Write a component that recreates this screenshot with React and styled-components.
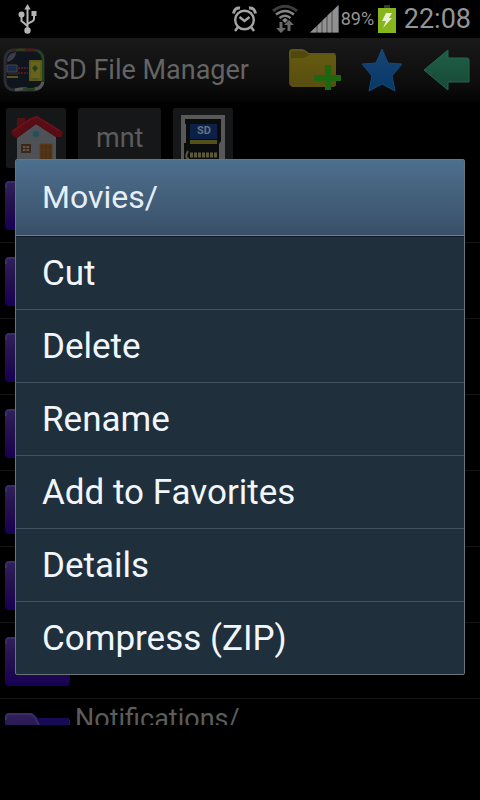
import React from "react";
import styled, { createGlobalStyle } from "styled-components";

const GlobalStyle = createGlobalStyle`
  * { box-sizing: border-box; }
  body { margin: 0; background: #000; font-family: Roboto, "Liberation Sans", sans-serif; }
  button { font: inherit; color: inherit; border: 0; margin: 0; padding: 0; background: none; cursor: pointer; }
  svg { display: block; flex: none; }
`;

const Screen = styled.div`
  position: relative;
  display: flex;
  flex-direction: column;
  height: 100vh;
  overflow: hidden;
  background: #000;
`;

const StatusBar = styled.header`
  display: flex;
  align-items: center;
  flex: none;
  height: 38px;
  padding: 0 9px 0 18px;
  color: #959595;
`;

const StatusGroup = styled.div`
  display: flex;
  align-items: center;
  margin-left: auto;
`;

const AlarmSlot = styled.span`
  margin-right: 15px;
`;

const WifiSlot = styled.span`
  margin-right: 12px;
`;

const Percent = styled.span`
  width: 39px;
  padding-left: 2px;
  font-size: 18px;
  line-height: 38px;
`;

const Clock = styled.time`
  margin-left: 8px;
  font-size: 27px;
  line-height: 38px;
`;

const TitleBar = styled.div`
  display: flex;
  align-items: center;
  flex: none;
  height: 64px;
  padding: 0 10px 0 3px;
  background: linear-gradient(#191919, #0c0c0c 75%, #030303);
`;

const AppTitle = styled.h1`
  flex: 1;
  margin: 0 0 0 8px;
  font-size: 27px;
  line-height: 34px;
  font-weight: 400;
  white-space: nowrap;
  color: #646464;
`;

const Actions = styled.div`
  display: flex;
  align-items: center;
  gap: 20px;
`;

const Breadcrumbs = styled.nav`
  display: flex;
  flex: none;
  gap: 12px;
  height: 65px;
  padding: 6px 6px 0;
`;

const Crumb = styled.button`
  display: flex;
  align-items: center;
  justify-content: center;
  min-width: 60px;
  height: 60px;
  padding: 0 ${(p) => (p.$text ? "18px" : "0")};
  border-radius: 2px;
  background: #161719;
  color: #5c5c5c;
  font-size: 27px;
`;

const FileList = styled.ul`
  flex: 1;
  min-height: 0;
  margin: 0;
  padding: 0;
  overflow: hidden;
  list-style: none;
`;

const FileRow = styled.li`
  display: flex;
  gap: 5px;
  height: 76px;
  padding: 14px 5px 0;
  border-bottom: 1px solid #151515;
`;

const FileName = styled.span`
  margin-top: -10px;
  font-size: 27px;
  line-height: 32px;
  color: #5c5c5c;
`;

const Footer = styled.div`
  flex: none;
  height: 75px;
`;

const Overlay = styled.div`
  position: absolute;
  inset: 38px 0 0;
  display: flex;
  align-items: center;
  padding: 0 15px 4px;
`;

const Dialog = styled.section`
  width: 100%;
  border: 1px solid #6d7479;
  border-radius: 2px;
  overflow: hidden;
  background: #1f2f3c;
  color: #f1f6fc;
`;

const DialogTitle = styled.h2`
  margin: 0;
  padding: 0 26px;
  font-size: 32px;
  line-height: 75px;
  font-weight: 400;
  color: #e6eef8;
  background: linear-gradient(#4c6f8e, #3a5068);
  border-bottom: 1px solid #687e92;
`;

const Menu = styled.div`
  display: flex;
  flex-direction: column;
  border-top: 1px solid #101c27;
`;

const MenuItem = styled.button`
  padding: 2px 26px 0;
  font-size: 35px;
  line-height: 70px;
  text-align: left;

  & + & { border-top: 1px solid #435260; }
`;

const UsbIcon = () => (
  <svg width="20" height="30" viewBox="0 0 20 30" fill="none" stroke="#b4b4b4" strokeWidth="2" aria-label="USB connected" role="img">
    <path d="M9.5 5v20M3.5 12v5l6 5M16 10v5c0 2-1 2-6.5 5" />
    <path d="m9.5 0 3.2 5.5H6.3z" fill="#b4b4b4" stroke="none" />
    <circle cx="3.5" cy="10.5" r="3" fill="#b4b4b4" stroke="none" />
    <path d="M13.5 7h5v5h-5z" fill="#b4b4b4" stroke="none" />
    <circle cx="9.5" cy="26.5" r="3.2" fill="#b4b4b4" stroke="none" />
  </svg>
);

const AlarmIcon = () => (
  <svg width="25" height="26" viewBox="0 0 25 26" fill="none" stroke="#a4a4a4" aria-label="Alarm" role="img">
    <circle cx="12.5" cy="14" r="9.3" strokeWidth="2.4" />
    <path d="m7.5 11 5 4 5-4" strokeWidth="2.3" />
    <path d="M1.5 7.5C2 3.5 4.5 1.500 8 2M23.500 7.500C23 3.500 20.500 1.500 17 2" strokeWidth="3" />
    <path d="m6 21-3 4M19 21l3 4" strokeWidth="2.5" />
  </svg>
);

const WifiIcon = () => (
  <svg width="26" height="28" viewBox="0 0 26 28" fill="none" aria-label="Wi-Fi" role="img">
    <path d="M1 6Q13-3.500 25 6" stroke="#3d3d3d" strokeWidth="3" />
    <path d="M4 9.500q9-7 18 0M7.500 13q5.500-4.500 11 0" stroke="#858585" strokeWidth="2.500" />
    <path d="m10 15 3-2 3 2-3 3z" fill="#858585" />
    <path d="M7.500 17h3v6h3.500l-5 5-5-5h3.500z" fill="#696969" />
    <path d="M18.500 26h-3v-6h-3.500l5-5 5 5h-3.500z" fill="#696969" />
  </svg>
);

const SignalIcon = () => (
  <svg width="29" height="28" viewBox="0 0 29 28" aria-label="Signal strength" role="img">
    <path d="M0 27.500 28.500 0v27.500z" fill="#4a4a4a" />
    <path d="M0 27.500 6.500 21.500v6zM7.500 20.500l4-4v11h-4zM12.500 15.500l4-4v16h-4zM17.500 10.500l4-4v21h-4zM22.500 6 28.500 0v27.500h-6z" fill="#919191" />
  </svg>
);

const BatteryIcon = () => (
  <svg width="18" height="28" viewBox="0 0 18 28" aria-label="Battery charging" role="img">
    <path d="M6 0h6v3H6z" fill="#383838" />
    <path d="M0 3h18v25H0z" fill="#86b51c" />
    <path d="M8 8h6l-3 5h3L5 23l3-7H4z" fill="#e9f2d6" />
  </svg>
);

const AppLogo = () => (
  <svg width="42" height="44" viewBox="0 0 42 44" aria-hidden="true">
    <rect x="2" y="2" width="38" height="40" rx="9" fill="#10151d" stroke="#2b2e31" strokeWidth="3" />
    <path d="M10 2q12-1 22 0" fill="none" stroke="#581616" strokeWidth="2" />
    <path d="M13 2q5-1 9 0M35 3q6 2 5 10v20" fill="none" stroke="#1d4a19" strokeWidth="2" />
    <path d="M12 42q8-2 12-1M31 41q7 0 9-7" fill="none" stroke="#565656" strokeWidth="3" />
    <path d="M20 41h12" stroke="#1d4a19" strokeWidth="2" />
    <path d="M4 13q0-7 9-9 0 7-8 10z" fill="#3a3d46" />
    <path d="M4 17h10v7H4z" fill="#1b2a49" stroke="#45434b" />
    <path d="M4 28h11v2H4z" fill="#5a5424" />
    <path d="M5 26h10" stroke="#28231b" strokeWidth="2" />
    <path d="M15 20h10M15 25h10" stroke="#571818" strokeWidth="2" strokeDasharray="2 1" />
    <rect x="26" y="12" width="13" height="21" rx="1" fill="#5c5a1b" />
    <path d="M28 14h9v16h-9z" fill="#68631b" />
    <path d="m32 17 3 3-3 4-3-4z" fill="#263f1d" />
    <path d="M30 31h5" stroke="#39463a" />
  </svg>
);

const AddFolderIcon = () => (
  <svg width="52" height="44" viewBox="0 0 52 44" aria-hidden="true">
    <defs>
      <linearGradient id="addFolder" x2="0" y2="1">
        <stop stopColor="#655a10" /><stop offset="1" stopColor="#574e10" />
      </linearGradient>
    </defs>
    <path d="M3 1h10q2 0 4 2l3 2h25q2 0 2 2v31H3q-3 0-3-3V4q0-3 3-3z" fill="#51480e" />
    <path d="M1 35V13q0-3 4-3h10l6-3h23q3 0 3 3v25q0 4-3 4H4q-3 0-3-4z" fill="url(#addFolder)" />
    <path d="M1 11V5q0-3 3-3h9q3 0 7 4h25" fill="none" stroke="#6b601c" />
    <path d="M36 17h6v10h10v6H42v9h-6v-9H25v-6h11z" fill="#1e6611" />
  </svg>
);

const StarIcon = () => (
  <svg width="42" height="44" viewBox="0 0 42 44" aria-hidden="true">
    <defs>
      <linearGradient id="star" x2="0" y2="1">
        <stop stopColor="#164577" /><stop offset="1" stopColor="#083866" />
      </linearGradient>
    </defs>
    <path d="m21 1 6 14 14 1-10 12 3 15-13-7-13 7 3-15L1 16l14-1z" fill="url(#star)" stroke="#154878" strokeLinejoin="round" />
  </svg>
);

const BackIcon = () => (
  <svg width="47" height="42" viewBox="0 0 47 42" aria-hidden="true">
    <defs>
      <linearGradient id="back" x2="0" y2="1">
        <stop stopColor="#205f47" /><stop offset="1" stopColor="#164936" />
      </linearGradient>
    </defs>
    <path d="M1 21 25 1v8h19q2 0 2 2v22H25v8z" fill="url(#back)" stroke="#27654f" strokeLinejoin="round" />
  </svg>
);

const HomeIcon = () => (
  <svg width="56" height="56" viewBox="0 0 56 56" aria-hidden="true">
    <path d="M9 16V8h8v6z" fill="#541014" />
    <path d="M9 28 28 14l20 13v26H9z" fill="#4e5156" />
    <path d="M3 21 22 8l7-2 26 16-1 5h-6L28 14 9 28l-5-3z" fill="#580c14" />
    <path d="m5 21 18-12 6-2 23 14" fill="none" stroke="#6a1119" strokeWidth="2" />
    <circle cx="28" cy="24" r="3.5" fill="#284d58" stroke="#355a63" />
    <rect x="14" y="35" width="8" height="7" fill="#56565b" stroke="#3b2817" strokeWidth="2" />
    <path d="M18 35v7M14 38.5h8" stroke="#3b2817" />
    <path d="M32 34h12v20H32z" fill="#4c3014" stroke="#5c3c1d" />
    <path d="M36 35v18M40 35v18M32 40h12" stroke="#58391a" />
  </svg>
);

const SdCardIcon = () => (
  <svg width="44" height="48" viewBox="0 0 44 48" aria-hidden="true">
    <path d="M0 1h44v47H0z" fill="#585858" />
    <path d="M4 5h36v22l-2 3v18H3V29h2V10H4z" fill="#0b0c0e" />
    <path d="M9 10h27v15H9z" fill="#0b2049" />
    <path d="M9 26h27v4H9z" fill="#565019" />
    <text x="23" y="20" textAnchor="middle" fontFamily="Roboto, sans-serif" fontSize="11" fontWeight="700" fill="#68727f">SD</text>
    <path d="M7 37q-4 7 1 8" fill="none" stroke="#5b573b" strokeWidth="2" />
    <path d="M9 41h28" stroke="#5c5838" strokeWidth="5" strokeDasharray="3 1" />
  </svg>
);

const FolderIcon = () => (
  <svg width="65" height="50" viewBox="0 0 65 50" aria-hidden="true">
    <defs>
      <linearGradient id="folder" x2="0" y2="1">
        <stop stopColor="#30215a" /><stop offset="0.5" stopColor="#23104e" /><stop offset="1" stopColor="#180054" />
      </linearGradient>
    </defs>
    <path d="M4 0h21q3 0 5 3l3 2h28q4 0 4 4v36q0 4-4 4H4q-4 0-4-4V4q0-4 4-4z" fill="url(#folder)" />
    <path d="M28 5h33q3 0 3 4v3H34z" fill="#170b56" />
    <path d="M1 7V5q0-4 4-4h20q3 0 5 4l4 7" fill="none" stroke="#3b2b68" strokeWidth="2" />
  </svg>
);

const files = ["", "", "", "", "", "", "", "Notifications/"];
const commands = ["Cut", "Delete", "Rename", "Add to Favorites", "Details", "Compress (ZIP)"];

export default function App() {
  return (
    <>
      <GlobalStyle />
      <Screen>
        <StatusBar>
          <UsbIcon />
          <StatusGroup>
            <AlarmSlot><AlarmIcon /></AlarmSlot>
            <WifiSlot><WifiIcon /></WifiSlot>
            <SignalIcon />
            <Percent>89%</Percent>
            <BatteryIcon />
            <Clock>22:08</Clock>
          </StatusGroup>
        </StatusBar>
        <TitleBar>
          <AppLogo />
          <AppTitle>SD File Manager</AppTitle>
          <Actions>
            <button aria-label="New folder"><AddFolderIcon /></button>
            <button aria-label="Favorites"><StarIcon /></button>
            <button aria-label="Back"><BackIcon /></button>
          </Actions>
        </TitleBar>
        <Breadcrumbs>
          <Crumb aria-label="Home"><HomeIcon /></Crumb>
          <Crumb $text>mnt</Crumb>
          <Crumb aria-label="SD card"><SdCardIcon /></Crumb>
        </Breadcrumbs>
        <FileList>
          {files.map((name, i) => (
            <FileRow key={i}>
              <FolderIcon />
              {name && <FileName>{name}</FileName>}
            </FileRow>
          ))}
        </FileList>
        <Footer />
        <Overlay>
          <Dialog role="dialog" aria-labelledby="dialog-title">
            <DialogTitle id="dialog-title">Movies/</DialogTitle>
            <Menu>
              {commands.map((label) => <MenuItem key={label}>{label}</MenuItem>)}
            </Menu>
          </Dialog>
        </Overlay>
      </Screen>
    </>
  );
}
